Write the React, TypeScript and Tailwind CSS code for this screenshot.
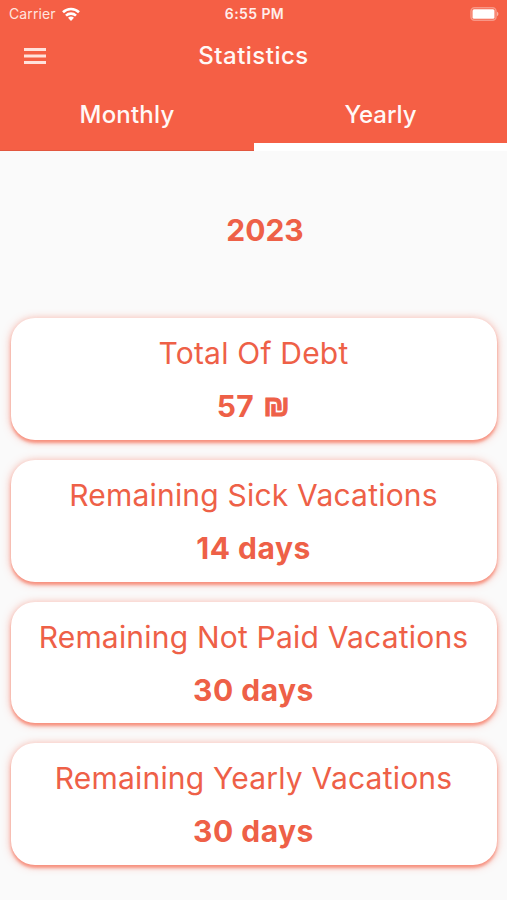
const STATS = [
  { label: "Total Of Debt", value: "57", unit: "₪" },
  { label: "Remaining Sick Vacations", value: "14 days" },
  { label: "Remaining Not Paid Vacations", value: "30 days" },
  { label: "Remaining Yearly Vacations", value: "30 days" },
];

function StatusBar() {
  return (
    <div className="grid grid-cols-3 items-center h-[27px] pl-[9px] pr-[8px] text-[14px]">
      <div className="flex items-center gap-[6px] text-[#ffe4df]">
        <span className="tracking-[0.1px]">Carrier</span>
        <svg width="18" height="14" viewBox="0 0 18 14" fill="none" stroke="#fff" strokeWidth="2.6">
          <path d="M1 5.2a11.5 11.5 0 0 1 16 0" />
          <path d="M4 8.6a7.2 7.2 0 0 1 10 0" />
          <path d="M9 14 6 10.8a4.4 4.4 0 0 1 6 0z" fill="#fff" stroke="none" />
        </svg>
      </div>
      <div className="pl-[1px] text-center font-semibold tracking-[0.4px] text-[#ffeeeb]">6:55 PM</div>
      <svg className="justify-self-end" width="29" height="14" viewBox="0 0 29 14">
        <rect x="1" y="0.75" width="25" height="12.5" rx="3.5" fill="none" stroke="#fff" strokeOpacity="0.35" strokeWidth="1.5" />
        <rect x="2.5" y="2.2" width="22" height="9.6" rx="1.5" fill="#fff" />
        <path d="M27 4.8v4.4a2.4 2.4 0 0 0 0-4.4z" fill="#fff" fillOpacity="0.5" />
      </svg>
    </div>
  );
}

export default function App() {
  return (
    <div className="flex flex-col h-[900px] w-[507px] overflow-hidden bg-[#fafafa] font-[Inter,sans-serif]">
      <header className="h-[151px] bg-[#f55f45] text-[#fff8f6]">
        <StatusBar />
        <div className="grid grid-cols-[70px_1fr_70px] items-center h-[58px]">
          <svg className="ml-[24px]" width="22" height="16" viewBox="0 0 22 16" fill="#ffe2dc">
            <rect y="0" width="22" height="3" />
            <rect y="6.5" width="22" height="3" />
            <rect y="13" width="22" height="3" />
          </svg>
          <h1 className="text-center text-[24px] font-medium tracking-[0.5px]">Statistics</h1>
        </div>
        <div className="grid grid-cols-[254px_253px] h-[66px] text-center text-[24px] font-medium tracking-[0.2px]">
          <div className="pt-[12px] border-b border-[#e2573f]">Monthly</div>
          <div className="pt-[12px] border-b-8 border-white tracking-normal">Yearly</div>
        </div>
      </header>

      <main className="flex flex-col text-[#ee6047]">
        <div className="h-[167px] pt-[57px] pl-[23px] text-center text-[30px] leading-[44px] font-bold">2023</div>
        <div className="flex flex-col gap-[20px] px-[10.5px]">
          {STATS.map((s) => (
            <div
              key={s.label}
              className="h-[121.8px] rounded-[24px] bg-white pt-[14px] text-center shadow-[0_3px_3px_#f55f4588,0_1px_8px_#f55f4588]"
            >
              <div className="text-[30px] leading-[42px] tracking-[0.2px] whitespace-nowrap">{s.label}</div>
              <div className="flex justify-center gap-[9px] mt-[11px] text-[30px] leading-[42px] font-bold tracking-[0.5px]">
                <span>{s.value}</span>
                {s.unit && (
                  <span className="font-['Liberation_Sans',sans-serif] [-webkit-text-stroke:0.9px_#ee6047]">{s.unit}</span>
                )}
              </div>
            </div>
          ))}
        </div>
      </main>
    </div>
  );
}
